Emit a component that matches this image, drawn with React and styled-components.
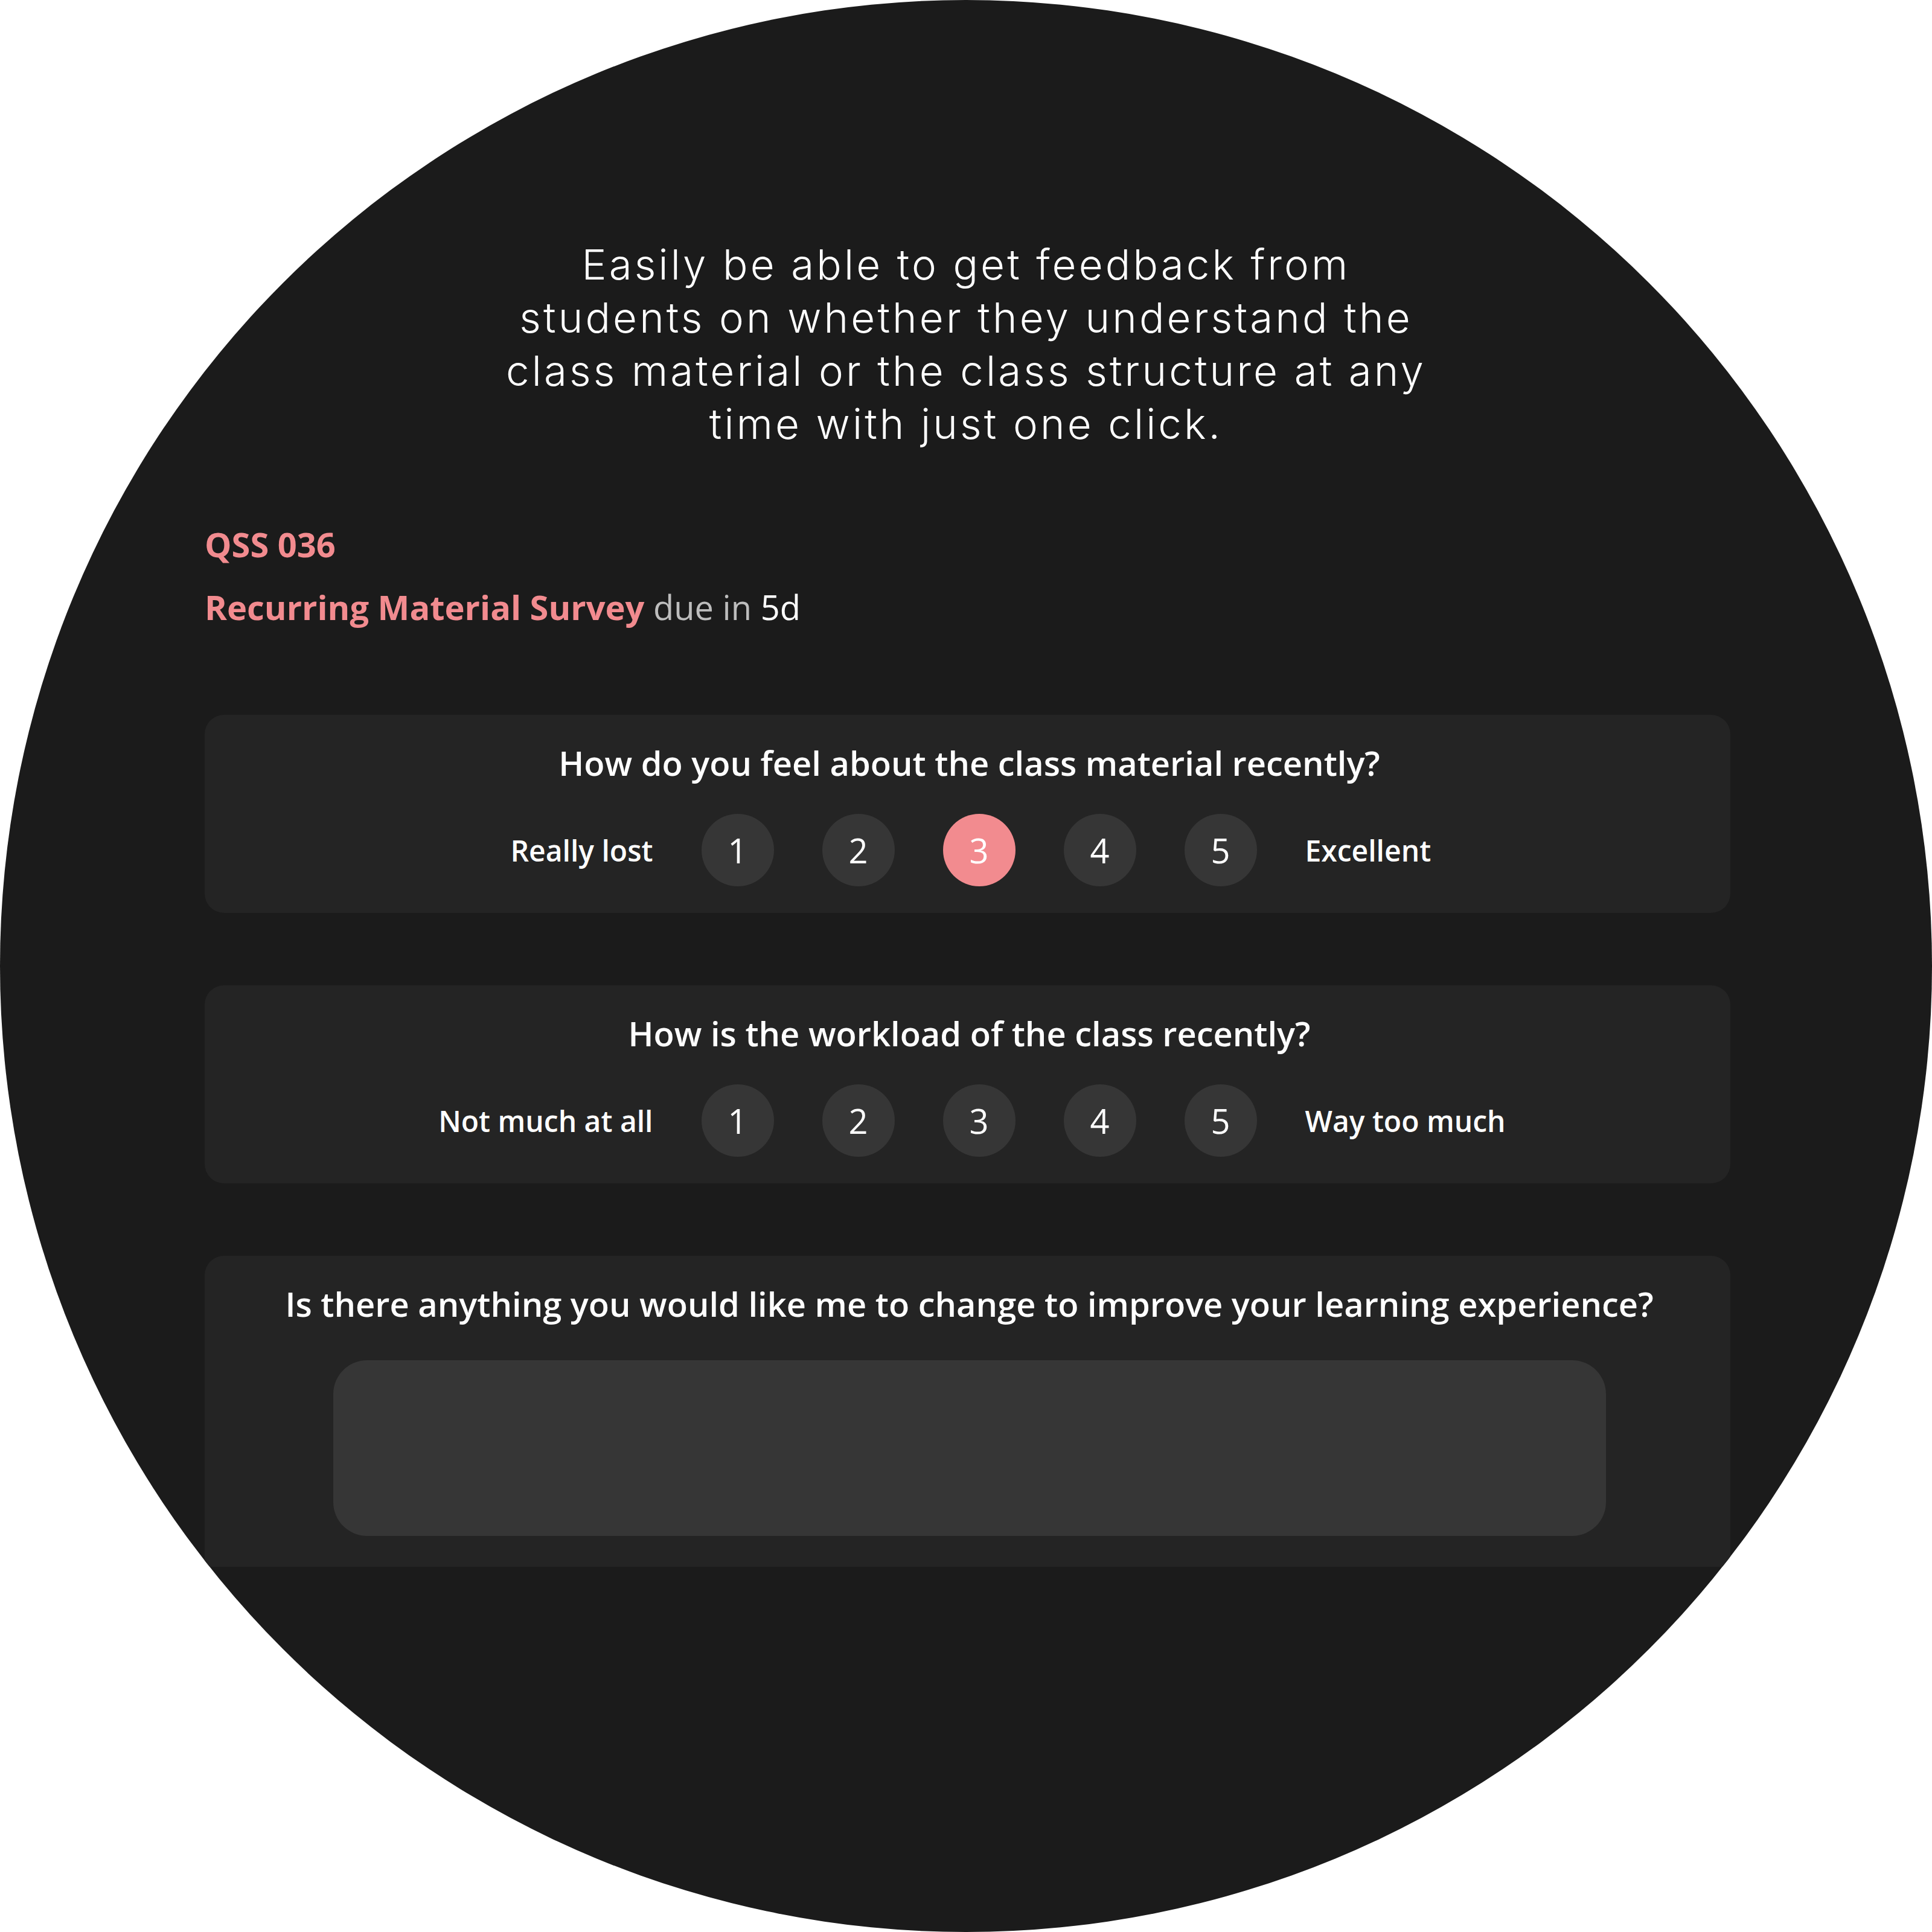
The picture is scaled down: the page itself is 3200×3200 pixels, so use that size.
import React, { useState } from 'react'
import styled, { createGlobalStyle } from 'styled-components'

const GlobalStyle = createGlobalStyle`
  html, body {
    margin: 0;
    padding: 0;
    background: #ffffff;
  }
  * {
    box-sizing: border-box;
  }
`

const Disc = styled.div`
  width: 3200px;
  height: 3200px;
  border-radius: 50%;
  background: #1b1b1b;
  overflow: hidden;
  padding-top: 394px;
  font-family: 'Open Sans', 'Noto Sans', sans-serif;
  color: #ffffff;
`

const Headline = styled.h1`
  margin: 0;
  font-family: Inter, 'Noto Sans', sans-serif;
  font-weight: 300;
  font-size: 69px;
  line-height: 88px;
  letter-spacing: 4.1px;
  text-align: center;
  color: #ffffff;
`

const Content = styled.div`
  width: 2527px;
  margin: 117px 0 0 339px;
  display: flex;
  flex-direction: column;
`

const Course = styled.div`
  font-size: 56px;
  line-height: 76px;
  font-weight: 700;
  color: #f28b8f;
`

const SurveyLine = styled.div`
  margin-top: 28px;
  font-size: 56px;
  line-height: 76px;
  color: #bdbdbd;

  strong {
    font-weight: 700;
    color: #f28b8f;
  }

  b {
    font-weight: 400;
    color: #ffffff;
  }
`

const Cards = styled.div`
  margin-top: 141px;
  display: flex;
  flex-direction: column;
  gap: 120px;
`

const Card = styled.section`
  background: #242424;
  border-radius: ${p => (p.$open ? '32px 32px 0 0' : '32px')};
  padding: 41px 37px ${p => (p.$open ? '51px' : '44px')} 43px;
  display: flex;
  flex-direction: column;
  align-items: center;
`

const Question = styled.h2`
  margin: 0;
  font-size: 56px;
  line-height: 76px;
  font-weight: 600;
  text-align: center;
  color: #ffffff;
`

const Scale = styled.div`
  margin-top: 47px;
  width: 100%;
  padding-left: 32px;
  display: grid;
  grid-template-columns: 1fr auto 1fr;
  align-items: center;
  column-gap: 80px;
`

const EndLabel = styled.span`
  font-size: 48px;
  font-weight: 600;
  line-height: 65px;
  color: #ffffff;
  text-align: ${p => p.$align};
`

const Dots = styled.div`
  display: flex;
  gap: 80px;
`

const Dot = styled.button`
  width: 120px;
  height: 120px;
  border-radius: 50%;
  border: none;
  padding: 0;
  display: flex;
  align-items: center;
  justify-content: center;
  background: ${p => (p.$active ? '#f28b8f' : '#363636')};
  color: #ffffff;
  font-family: 'Open Sans', 'Noto Sans', sans-serif;
  font-size: 56px;
  font-weight: 500;
  line-height: 76px;
  cursor: pointer;
`

const Answer = styled.div`
  margin-top: 56px;
  width: 2108px;
  height: 291px;
  border-radius: 56px;
  background: #363636;
`

const RatingQuestion = ({ question, low, high, initial }) => {
  const [value, setValue] = useState(initial)

  return (
    <Card>
      <Question>{question}</Question>
      <Scale>
        <EndLabel $align="right">{low}</EndLabel>
        <Dots>
          {[1, 2, 3, 4, 5].map(n => (
            <Dot key={n} $active={value === n} onClick={() => setValue(n)}>
              {n}
            </Dot>
          ))}
        </Dots>
        <EndLabel $align="left">{high}</EndLabel>
      </Scale>
    </Card>
  )
}

const App = () => (
  <>
    <GlobalStyle />
    <Disc>
      <Headline>
        Easily be able to get feedback from
        <br />
        students on whether they understand the
        <br />
        class material or the class structure at any
        <br />
        time with just one click.
      </Headline>
      <Content>
        <Course>QSS 036</Course>
        <SurveyLine>
          <strong>Recurring Material Survey</strong> due in <b>5d</b>
        </SurveyLine>
        <Cards>
          <RatingQuestion
            question="How do you feel about the class material recently?"
            low="Really lost"
            high="Excellent"
            initial={3}
          />
          <RatingQuestion
            question="How is the workload of the class recently?"
            low="Not much at all"
            high="Way too much"
            initial={null}
          />
          <Card $open>
            <Question>Is there anything you would like me to change to improve your learning experience?</Question>
            <Answer />
          </Card>
        </Cards>
      </Content>
    </Disc>
  </>
)

export default App
